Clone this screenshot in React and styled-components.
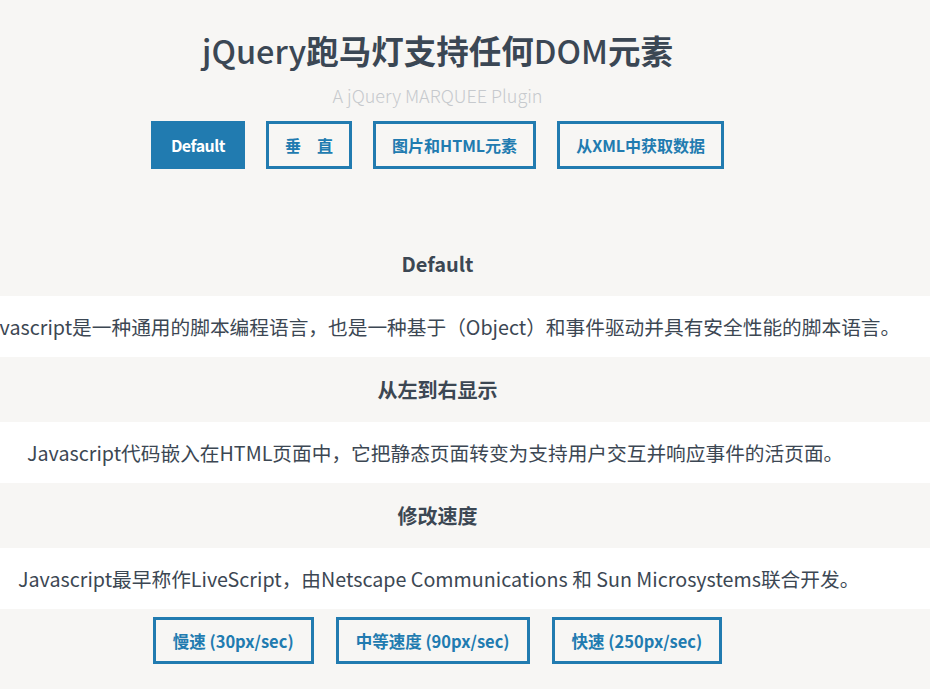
import React from 'react';
import styled, { createGlobalStyle } from 'styled-components';

const GlobalStyle = createGlobalStyle`
  html, body {
    margin: 0;
    padding: 0;
    background: #f7f6f4;
  }
  body {
    font-family: "Noto Sans CJK SC", "Open Sans", sans-serif;
    color: #3c4753;
  }
`;

const Page = styled.div`
  width: 930px;
  overflow: hidden;
`;

const Header = styled.header`
  width: 875px;
  display: flex;
  flex-direction: column;
  align-items: center;
  padding-top: 28px;
`;

const Title = styled.h1`
  margin: 0;
  font-size: 32.5px;
  line-height: 44px;
  font-weight: 700;
  color: #3b4754;
`;

const Latin = styled.span`
  font-weight: 500;
`;

const Subtitle = styled.p`
  margin: 11px 0 0;
  font-size: 18px;
  line-height: 24px;
  font-weight: 300;
  color: #c6c9cd;
`;

const ButtonRow = styled.nav`
  width: 875px;
  display: flex;
  justify-content: center;
  gap: ${p => p.$gap || 21}px;
  margin-top: ${p => p.$top || 0}px;
`;

const Button = styled.button`
  height: ${p => p.$h || 48}px;
  padding: 0 ${p => p.$pad || 16}px;
  border: 3px solid #217bb0;
  background: ${p => (p.$active ? '#217bb0' : 'transparent')};
  color: ${p => (p.$active ? '#ffffff' : '#217bb0')};
  font-family: "Noto Sans CJK SC", sans-serif;
  font-size: ${p => p.$size || 16}px;
  font-weight: 700;
  letter-spacing: ${p => p.$ls || 0}px;
  cursor: pointer;
  white-space: pre;
`;

const Sections = styled.main`
  margin-top: 62px;
`;

const SectionTitle = styled.h2`
  width: 875px;
  margin: 0;
  height: 65px;
  display: flex;
  align-items: center;
  justify-content: center;
  font-size: 20px;
  font-weight: 700;
  color: #3c4753;
`;

const Marquee = styled.div`
  height: 61px;
  background: #ffffff;
  display: flex;
  align-items: center;
  overflow: hidden;
  white-space: nowrap;
`;

const MarqueeText = styled.span`
  font-size: 19.7px;
  color: #3c4753;
  flex-shrink: 0;
`;

const sections = [
  {
    title: 'Default',
    text: 'Javascript是一种通用的脚本编程语言，也是一种基于（Object）和事件驱动并具有安全性能的脚本语言。',
    offset: -22,
  },
  {
    title: '从左到右显示',
    text: 'Javascript代码嵌入在HTML页面中，它把静态页面转变为支持用户交互并响应事件的活页面。',
    offset: 27,
  },
  {
    title: '修改速度',
    text: 'Javascript最早称作LiveScript，由Netscape Communications 和 Sun Microsystems联合开发。',
    offset: 18,
  },
];

export default function App() {
  return (
    <Page>
      <GlobalStyle />
      <Header>
        <Title>
          <Latin>jQuery</Latin>跑马灯支持任何<Latin>DOM</Latin>元素
        </Title>
        <Subtitle>A jQuery MARQUEE Plugin</Subtitle>
      </Header>

      <ButtonRow $top={14}>
        <Button $active $ls={-0.5} $pad={17}>Default</Button>
        <Button $pad={16}>{'垂　直'}</Button>
        <Button>图片和HTML元素</Button>
        <Button>从XML中获取数据</Button>
      </ButtonRow>

      <Sections>
        {sections.map(s => (
          <section key={s.title}>
            <SectionTitle>{s.title}</SectionTitle>
            <Marquee>
              <MarqueeText style={{ marginLeft: s.offset }}>{s.text}</MarqueeText>
            </Marquee>
          </section>
        ))}
      </Sections>

      <ButtonRow $top={8} $gap={22}>
        <Button $h={47} $pad={17} $size={16.5}>慢速 (30px/sec)</Button>
        <Button $h={47} $pad={17} $size={16.5}>中等速度 (90px/sec)</Button>
        <Button $h={47} $pad={17} $size={16.5}>快速 (250px/sec)</Button>
      </ButtonRow>
    </Page>
  );
}
